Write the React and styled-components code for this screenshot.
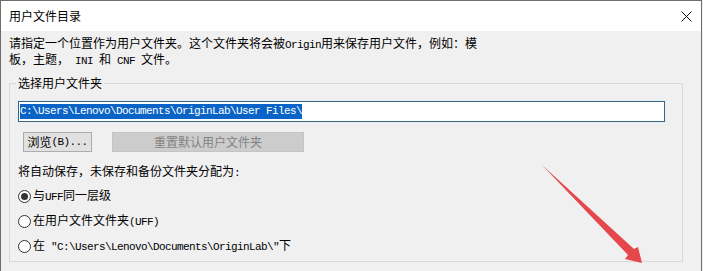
import React from 'react'
import styled, { createGlobalStyle } from 'styled-components'

const GlobalStyle = createGlobalStyle`
  html, body {
    margin: 0;
    padding: 0;
    background: #f0f0f0;
  }
  body {
    font-family: "Noto Sans CJK SC", "Liberation Sans", sans-serif;
    font-size: 12px;
    color: #000;
  }
`

const Window = styled.div`
  position: relative;
  width: 702px;
  height: 271px;
  box-sizing: border-box;
  border: 1px solid #6e6e6e;
  border-bottom: none;
  background: #f0f0f0;
  overflow: hidden;
`

const TitleBar = styled.div`
  height: 30px;
  background: #fff;
  display: flex;
  align-items: center;
  justify-content: space-between;
  padding: 0 9px 0 8px;
`

const Title = styled.div`
  font-size: 12px;
  line-height: 14px;
`

const CloseIcon = () => (
  <svg width="11" height="11" viewBox="0 0 11 11">
    <path d="M0.5 0.5 L10.5 10.5 M10.5 0.5 L0.5 10.5" stroke="#111" strokeWidth="1" />
  </svg>
)

const Body = styled.div`
  padding: 5px 0 0 8px;
`

const Description = styled.div`
  line-height: 13px;
  white-space: nowrap;
`

const Latin = styled.span`
  font-family: "Liberation Mono", monospace;
  font-size: 11px;
  letter-spacing: -0.6px;
  white-space: pre;
`

const Group = styled.fieldset`
  margin: 8px 0 0 0;
  width: 674px;
  box-sizing: border-box;
  border: 1px solid #d9d9d9;
  padding: 0 8px 7px 8px;
  min-inline-size: 0;
`

const Legend = styled.legend`
  margin-left: -2px;
  padding: 0 2px;
  line-height: 14px;
`

const PathInput = styled.div`
  margin-top: 11px;
  width: 647px;
  height: 21px;
  box-sizing: border-box;
  border: 1px solid #3a6683;
  background: #fff;
  display: flex;
  align-items: center;
  padding-left: 1px;
  box-shadow: 0 0 0 1px #e4eef7;
`

const Selected = styled.span`
  background: #0a64c8;
  color: #fff;
  font-family: "Liberation Mono", monospace;
  font-size: 11px;
  letter-spacing: -0.6px;
  line-height: 15px;
  white-space: pre;
`

const ButtonRow = styled.div`
  margin: 10px 0 0 5px;
  display: flex;
  gap: 20px;
`

const Button = styled.div`
  width: ${p => p.$w}px;
  height: 20px;
  box-sizing: border-box;
  display: flex;
  align-items: center;
  justify-content: center;
  border: 1px solid ${p => (p.$disabled ? '#c4c4c4' : '#adadad')};
  background: ${p => (p.$disabled ? '#cccccc' : '#e1e1e1')};
  color: ${p => (p.$disabled ? '#838383' : '#000')};
  line-height: 14px;
`

const Caption = styled.div`
  margin-top: 12px;
  line-height: 14px;
`

const RadioList = styled.div`
  margin-top: 8px;
  display: flex;
  flex-direction: column;
  gap: 9px;
`

const RadioRow = styled.div`
  display: flex;
  align-items: center;
  gap: 2px;
  height: 16px;
  line-height: 16px;
  white-space: nowrap;
`

const RadioCircle = styled.span`
  width: 13px;
  height: 13px;
  box-sizing: border-box;
  border-radius: 50%;
  border: 1px solid #333;
  background: #fff;
  display: flex;
  align-items: center;
  justify-content: center;
  &::after {
    content: '';
    width: 7px;
    height: 7px;
    border-radius: 50%;
    background: ${p => (p.$checked ? '#333' : 'transparent')};
  }
`

const Arrow = styled.svg`
  position: absolute;
  left: 0;
  top: 0;
  pointer-events: none;
`

const Radio = ({ checked, children }) => (
  <RadioRow>
    <RadioCircle $checked={checked} />
    <span>{children}</span>
  </RadioRow>
)

export default function App() {
  return (
    <>
      <GlobalStyle />
      <Window>
        <TitleBar>
          <Title>用户文件目录</Title>
          <CloseIcon />
        </TitleBar>
        <Body>
          <Description>
            请指定一个位置作为用户文件夹。这个文件夹将会被<Latin>Origin</Latin>用来保存用户文件，例如：模
            <br />
            板，主题，<Latin> INI </Latin>和<Latin> CNF </Latin>文件。
          </Description>
          <Group>
            <Legend>选择用户文件夹</Legend>
            <PathInput>
              <Selected>C:\Users\Lenovo\Documents\OriginLab\User Files\</Selected>
            </PathInput>
            <ButtonRow>
              <Button $w={69}>
                浏览<Latin>(B)...</Latin>
              </Button>
              <Button $w={192} $disabled>
                重置默认用户文件夹
              </Button>
            </ButtonRow>
            <Caption>将自动保存，未保存和备份文件夹分配为<Latin>:</Latin></Caption>
            <RadioList>
              <Radio checked>
                与<Latin>UFF</Latin>同一层级
              </Radio>
              <Radio>
                在用户文件文件夹<Latin>(UFF)</Latin>
              </Radio>
              <Radio>
                在<Latin> "C:\Users\Lenovo\Documents\OriginLab\"</Latin>下
              </Radio>
            </RadioList>
          </Group>
        </Body>
        <Arrow width="702" height="271" viewBox="0 0 702 271">
          <polygon
            points="541,164 633,248 637,246 641,262 624,258 627,254"
            fill="#e5474b"
          />
        </Arrow>
      </Window>
    </>
  )
}
